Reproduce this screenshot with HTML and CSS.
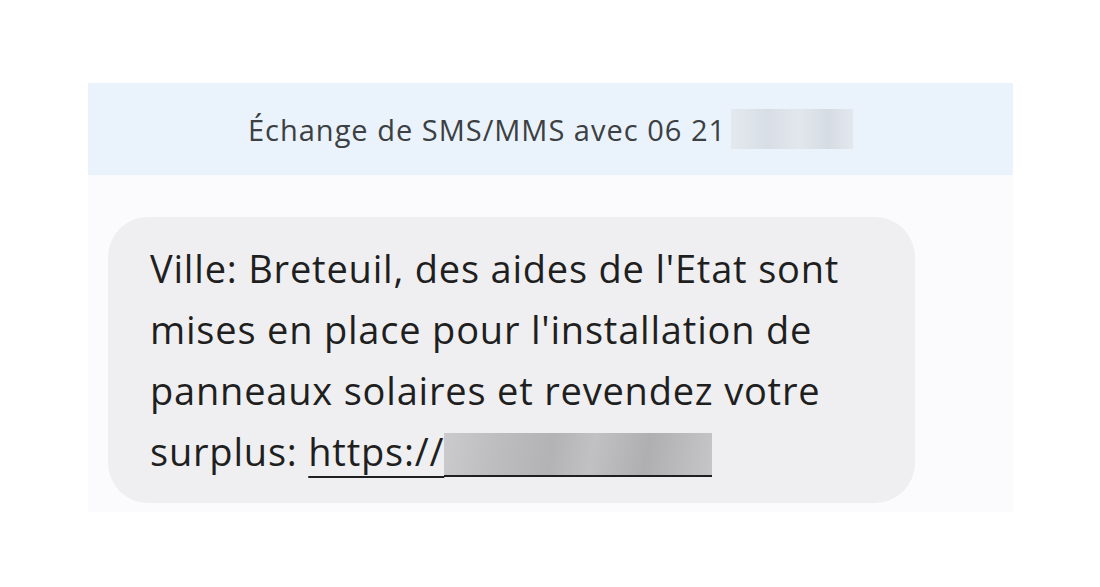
FILE: index.html
```html
<!DOCTYPE html>
<html lang="fr">
<head>
    <meta charset="UTF-8">
    <meta name="viewport" content="width=device-width, initial-scale=1.0">
    <title>Échange de SMS/MMS</title>
    <link rel="stylesheet" href="styles.css">
</head>
<body>
    <main class="thread">
        <header class="thread-header">
            <span>Échange de SMS/MMS avec 06 21</span>
            <span class="masked number-mask"></span>
        </header>

        <section class="messages">
            <div class="bubble">
                <p>Ville: Breteuil, des aides de l'Etat sont<br>mises en place pour l'installation de<br>panneaux solaires et revendez votre<br>surplus: <a href="#" class="link">https://<span class="masked link-mask"></span></a></p>
            </div>
        </section>
    </main>
</body>
</html>
```

FILE: styles.css
```css
/* SMS thread screenshot */
body {
    margin: 0;
    background-color: #ffffff;
    font-family: "Open Sans", Roboto, sans-serif;
}

.thread {
    width: 925px;
    margin: 83px 0 0 88px;
    background-color: #fbfbfd;
}

.thread-header {
    display: flex;
    justify-content: center;
    align-items: center;
    gap: 5px;
    height: 92px;
    background-color: #eaf3fb;
    color: #3c4043;
    font-size: 29px;
    letter-spacing: 1px;
}

.masked {
    display: inline-block;
}

.number-mask {
    width: 122px;
    height: 40px;
    background: linear-gradient(90deg, #e4e9ef 0%, #d8dee5 30%, #e2e7ed 55%, #d6dce3 80%, #e3e8ee 100%);
}

.messages {
    padding: 42px 0 9px 20px;
}

.bubble {
    width: 765px;
    padding: 21px 0 21px 42px;
    background-color: #efeff1;
    border-radius: 40px;
}

.bubble p {
    margin: 0;
    font-size: 38px;
    line-height: 61px;
    letter-spacing: 0.8px;
    white-space: nowrap;
    color: #1f1f1f;
}

.link {
    color: #1f1f1f;
    text-decoration: underline;
    text-decoration-thickness: 2px;
    text-underline-offset: 10px;
}

.link-mask {
    width: 268px;
    height: 42px;
    vertical-align: -11px;
    background: linear-gradient(100deg, #cbcbcd 0%, #bdbdbf 20%, #b3b3b5 40%, #c1c1c3 55%, #afafb1 75%, #c6c6c8 100%);
    border-bottom: 2px solid #1f1f1f;
}
```
